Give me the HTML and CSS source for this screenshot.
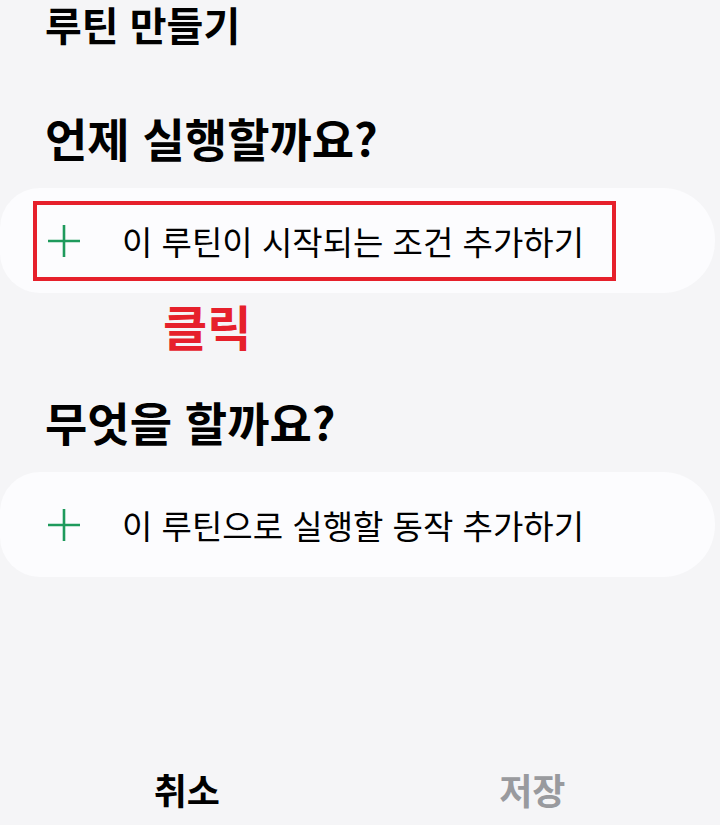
FILE: index.html
```html
<!DOCTYPE html>
<html lang="ko">
<head>
<meta charset="utf-8">
<link rel="stylesheet" href="styles.css">
</head>
<body>
<div class="screen">
  <h1 class="title">루틴 만들기</h1>

  <h2 class="section">언제 실행할까요?</h2>
  <div class="card">
    <div class="highlight">
      <svg class="plus" viewBox="0 0 34 34" width="34" height="34"><path d="M17 1V33M1 17H33" stroke="#1e9a5c" stroke-width="2.6" fill="none"/></svg>
      <span class="label">이 루틴이 시작되는 조건 추가하기</span>
    </div>
  </div>
  <div class="note">클릭</div>

  <h2 class="section second">무엇을 할까요?</h2>
  <div class="card">
    <div class="row">
      <svg class="plus" viewBox="0 0 34 34" width="34" height="34"><path d="M17 1V33M1 17H33" stroke="#1e9a5c" stroke-width="2.6" fill="none"/></svg>
      <span class="label">이 루틴으로 실행할 동작 추가하기</span>
    </div>
  </div>

  <div class="spacer"></div>
  <div class="actions">
    <button class="btn cancel">취소</button>
    <button class="btn save">저장</button>
  </div>
</div>
</body>
</html>
```

FILE: styles.css
```css
html, body {
  margin: 0;
  padding: 0;
  background: #f5f5f7;
}
body {
  font-family: "Noto Sans CJK KR", "Noto Sans", sans-serif;
  color: #000;
}
.screen {
  width: 720px;
  height: 825px;
  display: flex;
  flex-direction: column;
  overflow: hidden;
}
.title {
  margin: 0;
  padding: 0 0 0 45px;
  font-size: 40px;
  font-weight: 700;
  line-height: 48px;
}
.section {
  margin: 59px 0 0 0;
  padding-left: 45px;
  font-size: 46px;
  font-weight: 700;
  line-height: 60px;
}
.section.second {
  margin-top: 36px;
}
.card {
  margin-top: 21px;
  width: 715px;
  height: 105px;
  flex: none;
  background: #fcfcfe;
  border-radius: 40px 52px 52px 40px;
  display: flex;
  align-items: center;
  box-sizing: border-box;
}
.highlight {
  margin-left: 33px;
  width: 583px;
  height: 80px;
  border: 4px solid #e6202b;
  box-sizing: border-box;
  display: flex;
  align-items: center;
  padding-left: 10px;
}
.row {
  margin-left: 47px;
  display: flex;
  align-items: center;
}
.plus {
  display: block;
  flex: none;
}
.label {
  margin-left: 41px;
  font-size: 33px;
  font-weight: 400;
  line-height: 44px;
  white-space: nowrap;
}
.note {
  margin: 2px 0 0 163px;
  font-size: 48px;
  font-weight: 700;
  color: #e6202b;
  line-height: 60px;
}
.spacer {
  flex: 1;
}
.actions {
  display: grid;
  grid-template-columns: 1fr 1fr;
  padding: 0 15px 16px 14px;
  height: 40px;
}
.btn {
  background: none;
  border: 0;
  font-family: inherit;
  font-size: 36px;
  font-weight: 700;
  padding: 0;
  line-height: 40px;
}
.cancel { color: #000; }
.save { color: #999a9e; }
```
